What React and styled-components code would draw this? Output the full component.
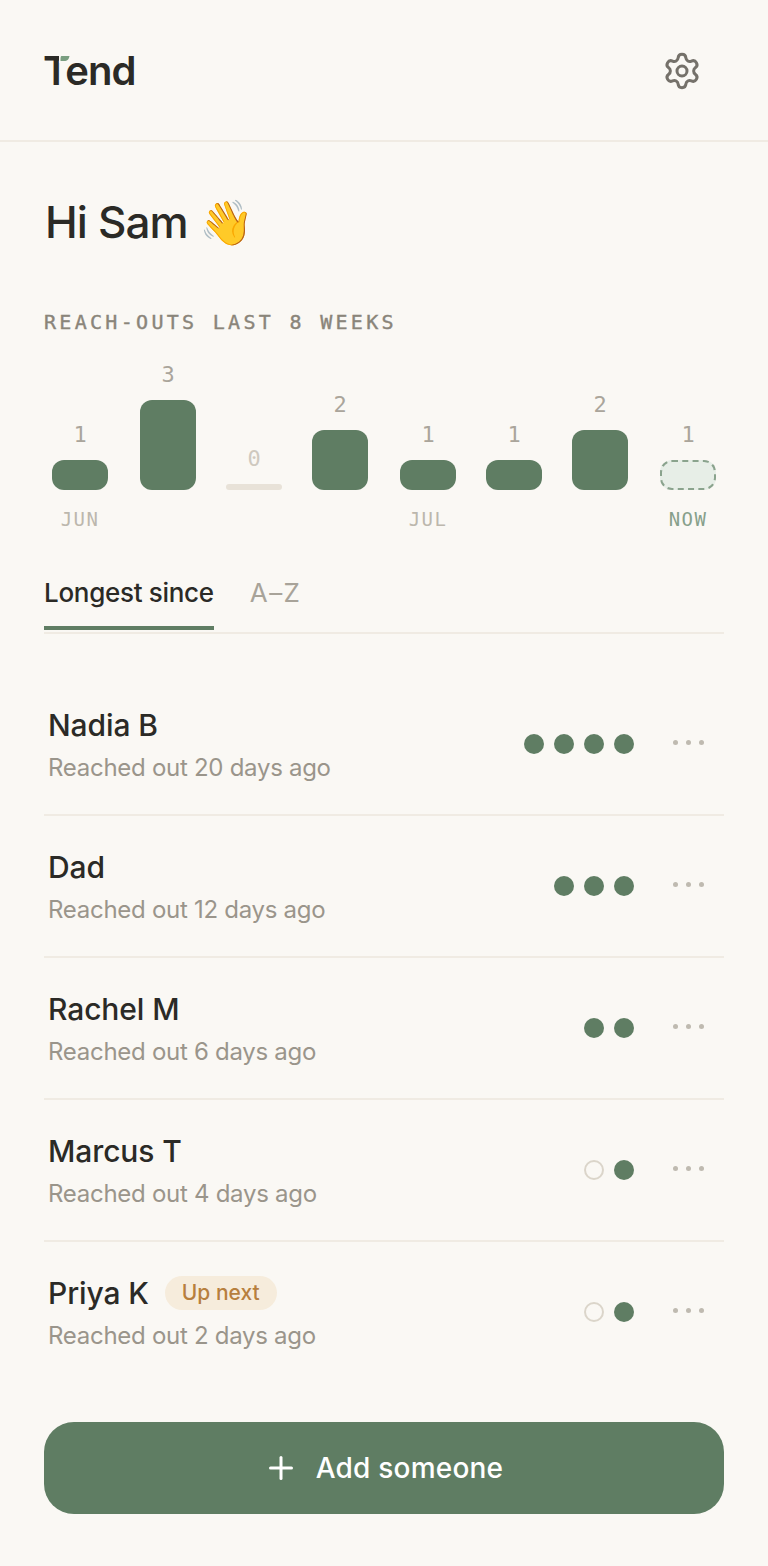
import React from 'react'
import styled, { createGlobalStyle } from 'styled-components'
import { Settings, Plus } from 'lucide-react'

const sans = '"Inter", "Noto Sans", sans-serif'
const mono = '"DejaVu Sans Mono", "Liberation Mono", monospace'

const GlobalStyle = createGlobalStyle`
  html, body { margin: 0; padding: 0; background: #faf8f4; }
  body { font-family: ${sans}; color: #2b2a26; }
  * { box-sizing: border-box; }
`

const Page = styled.div`
  width: 768px;
  height: 1566px;
  display: flex;
  flex-direction: column;
`

const Header = styled.header`
  height: 142px;
  padding: 2px 66px 0 43px;
  display: flex;
  align-items: center;
  justify-content: space-between;
  border-bottom: 2px solid #f0ebe3;
  color: #75716a;
`

const Logo = styled.div`
  position: relative;
  font-size: 40px;
  font-weight: 600;
  letter-spacing: -1px;
  line-height: 48px;
  color: #2b2a26;
`

// sits over the right arm of the T and swaps it for the leaf
const Leaf = styled.svg`
  position: absolute;
  left: 16px;
  top: 7px;
`

const Main = styled.main`
  flex: 1;
  padding: 0 44px;
  display: flex;
  flex-direction: column;
`

const Greeting = styled.h1`
  margin: 52px 0 0 1px;
  font-size: 44px;
  font-weight: 500;
  letter-spacing: -0.9px;
  line-height: 56px;
  height: 56px;
`

const ChartTitle = styled.div`
  margin-top: 58px;
  height: 28px;
  font-family: ${mono};
  font-size: 20px;
  line-height: 28px;
  letter-spacing: 3.3px;
  -webkit-text-stroke: 0.4px #8a857a;
  color: #8a857a;
`

const Chart = styled.div`
  height: 128px;
  margin-top: 26px;
  padding: 0 8px;
  display: grid;
  grid-template-columns: 88px 86px 86px 88px 86px 86px 88px 56px;
  align-items: end;
`

const Col = styled.div`
  width: 56px;
  display: flex;
  flex-direction: column;
  align-items: center;
`

const Value = styled.span`
  font-family: ${mono};
  font-size: 22px;
  line-height: 26px;
  margin-bottom: 12px;
  color: ${p => (p.$zero ? '#cfc9bf' : '#aaa59b')};
`

const Bar = styled.div`
  width: 56px;
  height: ${p => (p.$count ? p.$count * 30 : 6)}px;
  border-radius: ${p => (p.$count ? '12px' : '3px')};
  background: ${p => (p.$count ? '#5f7d63' : '#e8e2d8')};
  ${p => p.$now && 'background: #e7eee7; border: 2px dashed #8aa38d;'}
`

const Months = styled.div`
  margin-top: 16px;
  height: 26px;
  padding: 0 8px;
  display: grid;
  grid-template-columns: 88px 86px 86px 88px 86px 86px 88px 56px;
`

const Month = styled.span`
  width: 56px;
  text-align: center;
  font-family: ${mono};
  font-size: 19px;
  line-height: 26px;
  letter-spacing: 1.4px;
  white-space: nowrap;
  color: ${p => (p.$now ? '#87a08b' : '#bcb7ad')};
`

const Tabs = styled.div`
  margin-top: 38px;
  height: 64px;
  display: flex;
  gap: 36px;
  border-bottom: 2px solid #f0ebe3;
`

const Tab = styled.div`
  height: 60px;
  padding-top: 3px;
  font-size: 26px;
  line-height: 40px;
  font-weight: ${p => (p.$active ? 500 : 400)};
  letter-spacing: ${p => (p.$active ? '-0.3px' : '1.4px')};
  color: ${p => (p.$active ? '#2b2a26' : '#a8a399')};
  border-bottom: ${p => (p.$active ? '4px solid #5f7d63' : '0')};
`

const List = styled.div`
  margin-top: 40px;
`

const Row = styled.div`
  height: 142px;
  padding: 0 20px 0 4px;
  display: flex;
  align-items: center;
  border-bottom: 2px solid ${p => (p.$last ? 'transparent' : '#f0ebe3')};
`

const Person = styled.div`
  flex: 1;
  padding-top: 2px;
`

const NameLine = styled.div`
  display: flex;
  align-items: center;
  gap: 16px;
  height: 40px;
`

const Name = styled.span`
  font-size: 30px;
  font-weight: 500;
  letter-spacing: -0.1px;
  line-height: 40px;
`

const Badge = styled.span`
  height: 34px;
  padding: 0 17px;
  border-radius: 17px;
  background: #f6ecdc;
  color: #b77f3e;
  font-size: 21px;
  font-weight: 500;
  line-height: 34px;
`

const Since = styled.div`
  margin-top: 6px;
  font-size: 24px;
  letter-spacing: -0.28px;
  line-height: 34px;
  color: #9a958b;
`

const Dots = styled.div`
  display: flex;
  gap: 10px;
`

const Dot = styled.span`
  width: 20px;
  height: 20px;
  border-radius: 50%;
  background: ${p => (p.$empty ? 'transparent' : '#5f7d63')};
  border: ${p => (p.$empty ? '2px solid #dbd5ca' : '0')};
`

const More = styled.div`
  margin: -4px 0 0 39px;
  display: flex;
  gap: 8px;
`

const Pip = styled.span`
  width: 5px;
  height: 5px;
  border-radius: 50%;
  background: #bfbab0;
`

const AddButton = styled.button`
  margin-top: 38px;
  height: 92px;
  padding: 0 2px 0 0;
  border: 0;
  border-radius: 30px;
  background: #5f7d63;
  color: #fff;
  font-family: ${sans};
  font-size: 28px;
  letter-spacing: 0.2px;
  font-weight: 500;
  display: flex;
  align-items: center;
  justify-content: center;
  gap: 17px;
`

const weeks = [
  { count: 1, month: 'JUN' },
  { count: 3 },
  { count: 0 },
  { count: 2 },
  { count: 1, month: 'JUL' },
  { count: 1 },
  { count: 2 },
  { count: 1, month: 'NOW', now: true },
]

const people = [
  { name: 'Nadia B', days: 20, dots: [1, 1, 1, 1] },
  { name: 'Dad', days: 12, dots: [1, 1, 1] },
  { name: 'Rachel M', days: 6, dots: [1, 1] },
  { name: 'Marcus T', days: 4, dots: [0, 1] },
  { name: 'Priya K', days: 2, dots: [0, 1], next: true },
]

export default function App() {
  return (
    <Page>
      <GlobalStyle />
      <Header>
        <Logo>
          Tend
          <Leaf width="12" height="9" viewBox="0 0 12 9">
            <rect width="12" height="9" fill="#faf8f4" />
            <path d="M2.5 2H10.5C10 5 8.5 7 5 7H1.5C1.5 4 1.5 2 2.5 2Z" fill="#7a9e80" />
          </Leaf>
        </Logo>
        <Settings size={40} strokeWidth={1.8} />
      </Header>
      <Main>
        <Greeting>Hi Sam 👋</Greeting>
        <ChartTitle>REACH-OUTS LAST 8 WEEKS</ChartTitle>
        <Chart>
          {weeks.map((w, i) => (
            <Col key={i}>
              <Value $zero={w.count === 0}>{w.count}</Value>
              <Bar $count={w.count} $now={w.now} />
            </Col>
          ))}
        </Chart>
        <Months>
          {weeks.map((w, i) => (
            <Month key={i} $now={w.now}>{w.month}</Month>
          ))}
        </Months>
        <Tabs>
          <Tab $active>Longest since</Tab>
          <Tab>A–Z</Tab>
        </Tabs>
        <List>
          {people.map((p, i) => (
            <Row key={p.name} $last={i === people.length - 1}>
              <Person>
                <NameLine>
                  <Name>{p.name}</Name>
                  {p.next && <Badge>Up next</Badge>}
                </NameLine>
                <Since>Reached out {p.days} days ago</Since>
              </Person>
              <Dots>
                {p.dots.map((d, j) => <Dot key={j} $empty={!d} />)}
              </Dots>
              <More><Pip /><Pip /><Pip /></More>
            </Row>
          ))}
        </List>
        <AddButton>
          <Plus size={36} strokeWidth={2} />
          Add someone
        </AddButton>
      </Main>
    </Page>
  )
}
